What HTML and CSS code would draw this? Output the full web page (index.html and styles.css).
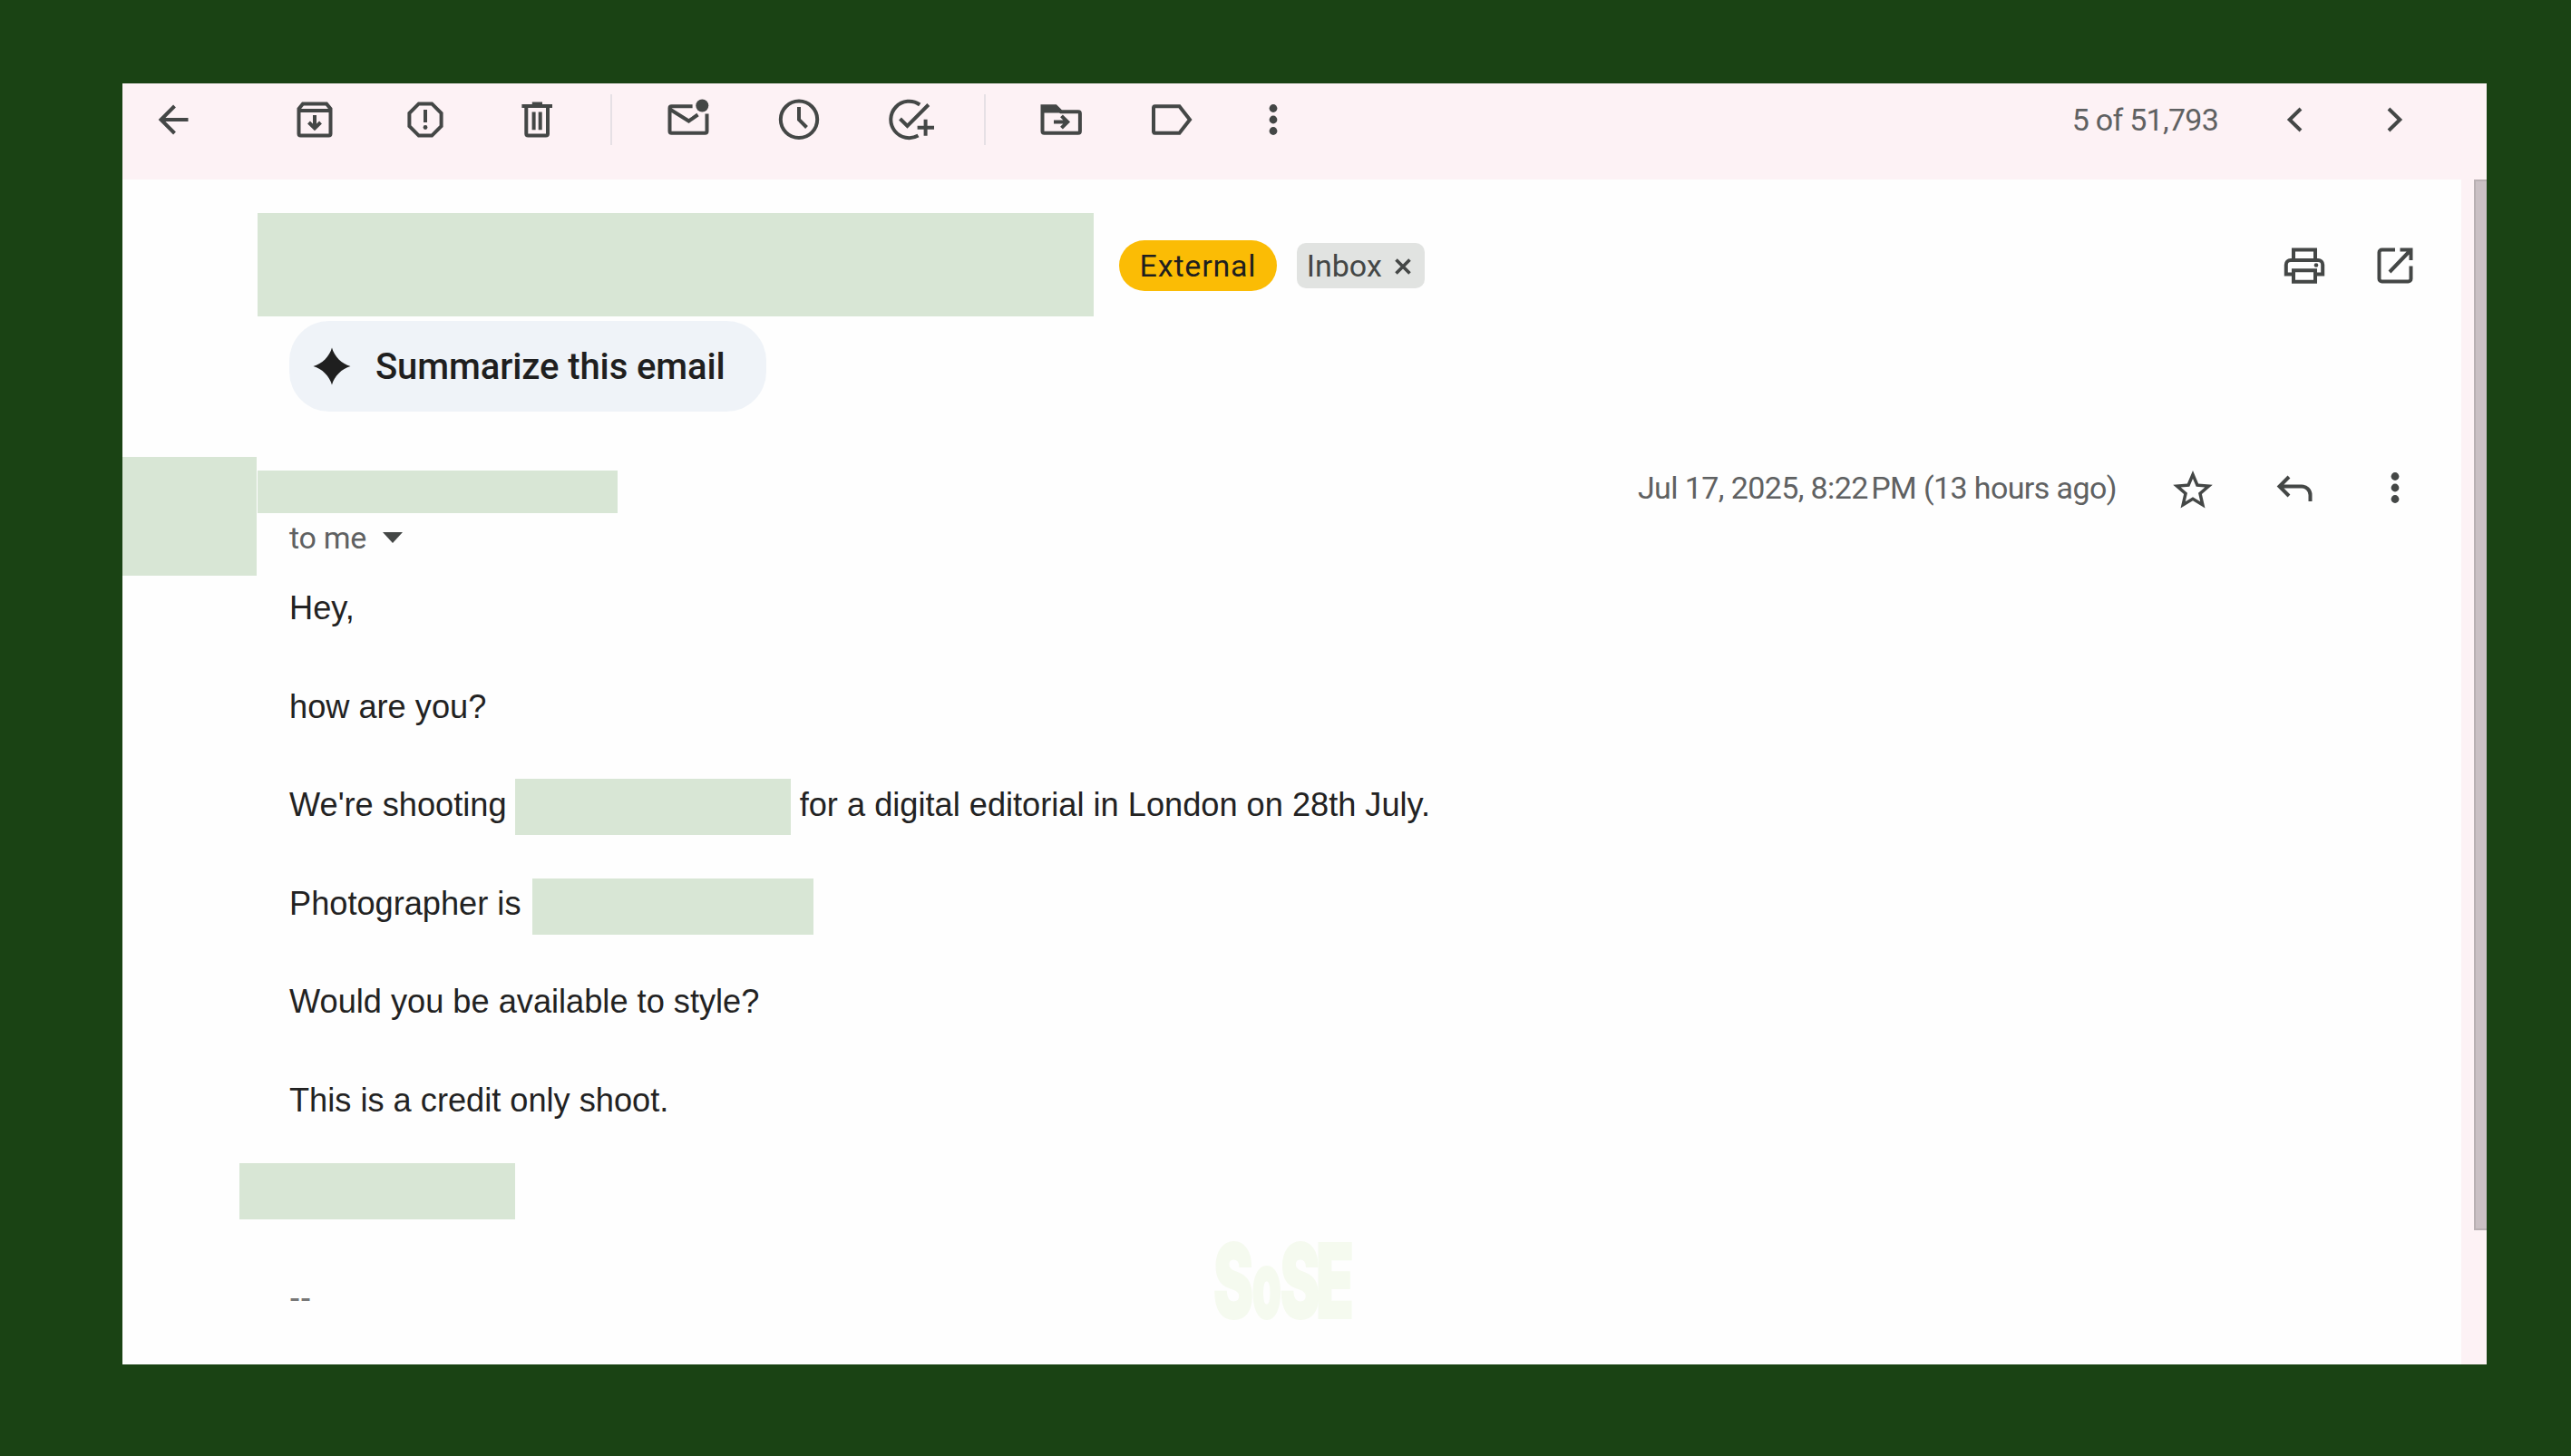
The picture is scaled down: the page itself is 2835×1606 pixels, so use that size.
FILE: index.html
```html
<!DOCTYPE html>
<html lang="en">
<head>
<meta charset="utf-8">
<title>Inbox message</title>
<link rel="stylesheet" href="styles.css">
</head>
<body>
<div class="window">
  <header class="toolbar">
    <button class="tool back" aria-label="Back"><svg class="icon" viewBox="0 0 56 56"><path d="M44.5 28H15M29.5 13 14.5 28l15 15"/></svg></button>
    <div class="group">
      <button class="tool" aria-label="Archive"><svg class="icon" viewBox="0 0 56 56"><path d="M10.5 16l4.5-5.5h26l4.500 5.500v27.500a2 2 0 0 1-2 2h-31a2 2 0 0 1-2-2zM10.500 18h35M28 23v14M21.500 31l6.500 6.500 6.500-6.500"/></svg></button>
      <button class="tool" aria-label="Report spam"><svg class="icon" viewBox="0 0 56 56"><path d="M20.800 10.400h14.400l10.400 10.400v14.400L35.200 45.600H20.800L10.400 35.200V20.800zM28 17v14"/><circle class="fill" cx="28" cy="36.500" r="2.400"/></svg></button>
      <button class="tool" aria-label="Delete"><svg class="icon" viewBox="0 0 56 56"><path d="M11.400 13H45M16.300 13v30.500a2 2 0 0 0 2 2h19.700a2 2 0 0 0 2-2V13M24.600 19.500v19.700M31.700 19.500v19.700"/><path class="fill" d="M22.800 8.500H34V12H22.800z"/></svg></button>
    </div>
    <span class="divider"></span>
    <div class="group">
      <button class="tool" aria-label="Mark as unread"><svg class="icon" viewBox="0 0 56 56"><path d="M32.600 13.200H9.500a2 2 0 0 0-2 2v25.600a2 2 0 0 0 2 2h37a2 2 0 0 0 2-2V21.500M8.500 17l20 12.500 10-7"/><circle class="fill" cx="43.300" cy="12.500" r="7"/></svg></button>
      <button class="tool" aria-label="Snooze"><svg class="icon" viewBox="0 0 56 56"><circle cx="28" cy="27.800" r="20.200"/><path d="M28 14v14l8.500 8.500"/></svg></button>
      <button class="tool" aria-label="Add to tasks"><svg class="icon" viewBox="0 0 56 56"><path d="M39.200 11.500A20.200 20.200 0 1 0 37.500 45.500M17.500 27l8 8L48.800 11.500M45.600 27.800v18M36.600 36.800h18.400"/></svg></button>
    </div>
    <span class="divider"></span>
    <div class="group">
      <button class="tool" aria-label="Move to"><svg class="icon" viewBox="0 0 56 56"><path d="M7.500 13.200h14.500l6 6h18.900a2 2 0 0 1 2 2v19.600a2 2 0 0 1-2 2H9.500a2 2 0 0 1-2-2zM20 30.500h13M28.500 23.800l6.700 6.700-6.700 6.700"/><path class="fill" d="M7 13h15l6 7.500H7z"/></svg></button>
      <button class="tool" aria-label="Labels"><svg class="icon" viewBox="0 0 56 56"><path d="M9.500 13.200h27L48 28 36.500 42.800h-27a1.500 1.500 0 0 1-1.500-1.500V14.700a1.500 1.500 0 0 1 1.500-1.500z"/></svg></button>
      <button class="tool narrow" aria-label="More"><svg class="icon" viewBox="0 0 56 56"><g class="fill"><circle cx="28" cy="15.500" r="4.400"/><circle cx="28" cy="28" r="4.400"/><circle cx="28" cy="40.500" r="4.400"/></g></svg></button>
    </div>
    <span class="count">5 of 51,793</span>
    <button class="tool newer" aria-label="Newer"><svg class="icon" viewBox="0 0 56 56"><path d="M35 16 22.700 28 35 40"/></svg></button>
    <button class="tool older" aria-label="Older"><svg class="icon" viewBox="0 0 56 56"><path d="M21 16l12.300 12L21 40"/></svg></button>
  </header>

  <div class="pane">
    <main class="message">
      <div class="subject-row">
        <span class="redacted subject"></span>
        <span class="chip external">External</span>
        <span class="chip inbox">Inbox<svg class="remove" viewBox="0 0 20 20"><path d="M2.500 2.500l15 15M17.500 2.500l-15 15"/></svg></span>
        <div class="subject-actions">
          <svg class="icon" viewBox="0 0 56 56"><path d="M16 21V10.500h24V21M15 37.500H7.800V27a5 5 0 0 1 5-5h30.400a5 5 0 0 1 5 5v10.500H41M16 33.200h24v12.500H16z"/><circle class="fill" cx="41" cy="27.500" r="2.300"/></svg>
          <svg class="icon" viewBox="0 0 56 56"><path d="M28 10.500H13.500a3 3 0 0 0-3 3v29a3 3 0 0 0 3 3h29a3 3 0 0 0 3-3V28.500M22 35 44.500 11.500M33.500 10.500h12V22"/></svg>
        </div>
      </div>

      <button class="summarize"><svg class="spark" viewBox="0 0 42 42"><path d="M21 0.500C23.500 10 32 18.500 41.500 21 32 23.500 23.500 32 21 41.500 18.500 32 10 23.500 0.500 21 10 18.500 18.500 10 21 0.500z"/></svg>Summarize this email</button>

      <div class="sender-row">
        <span class="redacted avatar"></span>
        <div class="sender">
          <span class="redacted name"></span>
          <span class="recipient">to me <i class="caret"></i></span>
        </div>
        <div class="meta">
          <time class="date">Jul 17, 2025, 8:22<span class="thin"> </span>PM (13 hours ago)</time>
          <svg class="icon star" viewBox="0 0 56 56"><path class="fill" transform="translate(1.840 4.640) scale(2.180)" d="M22 9.240l-7.190-.62L12 2 9.190 8.630 2 9.240l5.460 4.730L5.820 21 12 17.270 18.180 21l-1.630-7.030L22 9.240zM12 15.400l-3.760 2.270 1-4.280-3.320-2.880 4.380-.38L12 6.100l1.710 4.040 4.380.38-3.320 2.880 1 4.280L12 15.400z"/></svg>
          <svg class="icon reply" viewBox="0 0 56 56"><path d="M22 16 11.500 26.500 22 37M12 26.500h24a9.500 9.500 0 0 1 9.500 9.500v7"/></svg>
          <svg class="icon more" viewBox="0 0 56 56"><g class="fill"><circle cx="28" cy="15.500" r="4.400"/><circle cx="28" cy="28" r="4.400"/><circle cx="28" cy="40.500" r="4.400"/></g></svg>
        </div>
      </div>

      <div class="body">
        <p>Hey,</p>
        <p>how are you?</p>
        <p>We're shooting <span class="redacted talent"></span> for a digital editorial in London on 28th July.</p>
        <p>Photographer is <span class="redacted photographer"></span></p>
        <p>Would you be available to style?</p>
        <p>This is a credit only shoot.</p>
        <p><span class="redacted signature"></span></p>
        <p class="dashes">--</p>
      </div>
    </main>
    <div class="scroll-track"><div class="scroll-thumb"></div></div>
  </div>

  <svg class="watermark" viewBox="0 0 200 190">
    <text transform="translate(22 133.500) scale(.58 1)">S</text>
    <text class="small" transform="translate(64.500 133.500) scale(.5 1)">o</text>
    <text transform="translate(95.500 133.500) scale(.58 1)">S</text>
    <text transform="translate(135 133.500) scale(.6 1)">E</text>
  </svg>
</div>
</body>
</html>
```

FILE: styles.css
```css
* { box-sizing: border-box; }

body {
  margin: 0;
  width: 2835px;
  height: 1606px;
  padding: 92px 93px 101px 135px;
  background: #1a4314;
  font-family: Roboto, "Liberation Sans", sans-serif;
  color: #1f1f1f;
  overflow: hidden;
}

button { border: 0; padding: 0; background: none; font: inherit; color: inherit; }

.window {
  position: relative;
  height: 1413px;
  display: flex;
  flex-direction: column;
  background: #fefefe;
}

.icon {
  display: block;
  flex: none;
  width: 56px;
  height: 56px;
  fill: none;
  stroke: #444746;
  stroke-width: 4;
}
.icon .fill { fill: #444746; stroke: none; }

/* Toolbar */
.toolbar {
  flex: none;
  height: 106px;
  padding: 11.500px 73px 0 28px;
  display: flex;
  align-items: flex-start;
  background: #fdf2f5;
}
.group { display: flex; }
.tool {
  flex: none;
  width: 122.300px;
  height: 56px;
  display: flex;
  justify-content: center;
}
.tool.back { width: 56px; margin-right: 67px; }
.tool.narrow { width: 101px; }
.divider { flex: none; width: 2px; height: 56px; margin: 0 22px 0 20.500px; background: #e6e0e5; }
.count {
  margin-left: auto;
  margin-right: 56px;
  line-height: 56px;
  font-size: 34px;
  letter-spacing: -0.750px;
  color: #5f6162;
}
.tool.newer, .tool.older { width: 56px; }
.tool.newer { margin-right: 55px; }

/* Message pane */
.pane { flex: 1; display: flex; }
.message { width: 2579px; padding-top: 37px; background: #fefefe; }
.scroll-track {
  flex: 1;
  display: flex;
  justify-content: flex-end;
  background: #fdf2f5;
}
.scroll-thumb {
  width: 14px;
  height: 1159px;
  background: #cac0c4;
  border: solid #b9b0b3;
  border-width: 2px 0 2px 2px;
}

.redacted { flex: none; display: block; background: #d8e6d5; }

.subject-row { display: flex; align-items: center; padding-left: 149px; height: 114px; }
.subject { width: 922px; height: 114px; }
.chip { display: flex; align-items: center; justify-content: center; font-size: 34px; margin-top: 1px; }
.external {
  width: 174px;
  height: 56px;
  margin-left: 28px;
  border-radius: 28px;
  background: #fbbc05;
  letter-spacing: 0.800px;
}
.inbox {
  width: 141px;
  height: 50px;
  margin-left: 22px;
  padding-right: 3px;
  border-radius: 10px;
  gap: 13.500px;
  background: #e1e3e1;
  color: #444746;
}
.remove { width: 20px; height: 20px; margin-top: 3px; fill: none; stroke: #444746; stroke-width: 3.600; }
.subject-actions { margin: 1px 45.500px 0 auto; display: flex; gap: 44px; }

.summarize {
  width: 526px;
  height: 100px;
  margin: 5px 0 50px 184px;
  padding-left: 26px;
  border-radius: 44px;
  display: flex;
  align-items: center;
  gap: 27px;
  background: #eff3f8;
  font-size: 40px;
  font-weight: 500;
  letter-spacing: -0.100px;
}
.spark { width: 42px; height: 42px; fill: #1f1f1f; }

.sender-row { display: flex; height: 131px; }
.avatar { width: 148px; height: 131px; }
.sender { margin-left: 1px; padding-top: 15px; }
.name { width: 397px; height: 47px; }
.recipient {
  display: flex;
  align-items: center;
  gap: 18px;
  height: 40px;
  margin: 7px 0 0 35px;
  font-size: 34px;
  letter-spacing: -0.300px;
  color: #5f6162;
}
.caret {
  border: solid transparent;
  border-width: 12px 11px 0;
  border-top-color: #444746;
}
.meta {
  flex: 1;
  height: 68px;
  margin-right: 45.500px;
  display: flex;
  align-items: center;
  justify-content: flex-end;
}
.date { margin-top: -1px; font-size: 34px; letter-spacing: -0.600px; color: #5f6162; }
.thin { font-size: 16px; }
.star { margin-left: 56px; }
.reply { margin-left: 55.500px; }
.more { margin-left: 55px; }

/* Message text */
.body {
  padding: 9px 0 0 184px;
  display: flex;
  flex-direction: column;
  gap: 54.250px;
  font-family: "Liberation Sans", Arial, sans-serif;
  font-size: 36.200px;
  line-height: 54.250px;
  color: #222;
}
.body p { margin: 0; height: 54.250px; display: flex; white-space: pre; }
.talent { width: 304px; height: 62px; margin: -2px 0 0 -1px; }
.photographer { width: 310px; height: 62px; margin: -1px 0 0 2px; }
.signature { width: 304px; height: 62px; margin: -12px 0 0 -55px; }
.body .dashes { color: #777; }

.watermark {
  position: absolute;
  left: 1181px;
  top: 1228px;
  width: 200px;
  height: 190px;
  overflow: visible;
  font-family: Inter, sans-serif;
  font-weight: 900;
  font-size: 114px;
  fill: #f5faef;
  stroke: #f5faef;
  stroke-width: 2;
}
.watermark .small { font-size: 104px; }
```
